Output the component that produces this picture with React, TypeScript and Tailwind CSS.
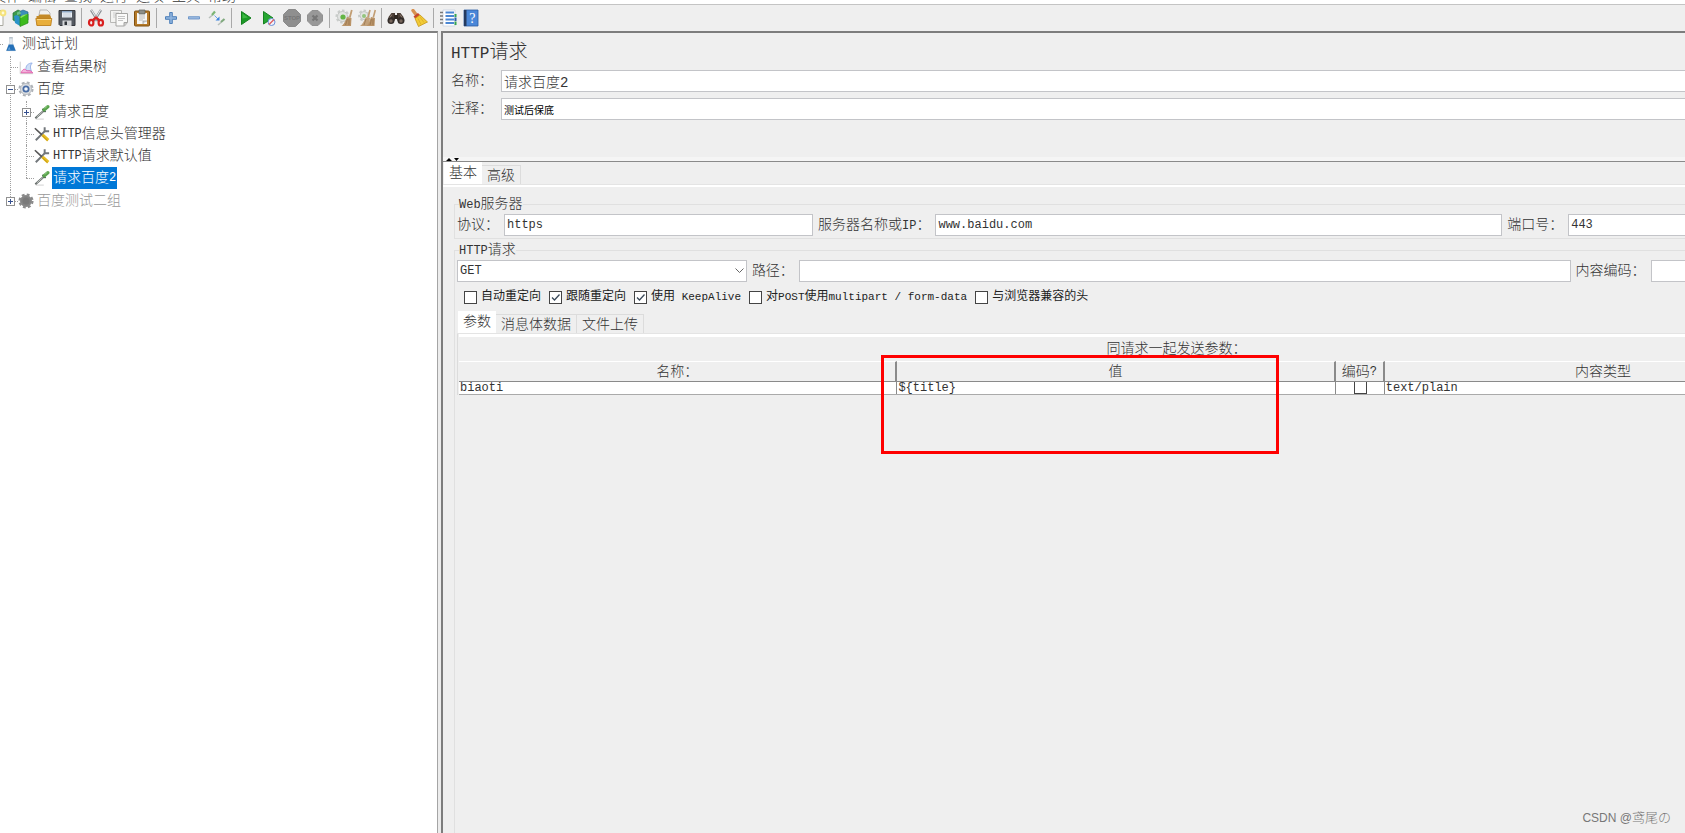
import { ReactNode, useId, useState } from "react";
import clsx from "clsx";

const MENUS = ["文件", "编辑", "查找", "运行", "选项", "工具", "帮助"];

const FIELD =
  "h-[22px] min-w-0 border border-[#c3c4c8] bg-white px-[2px] outline-none focus:border-[#0078d7]";

// Half-width runs are set a little smaller so two of them fill one CJK cell
const MixedText = ({ text, latin = "text-[12px]" }: { text: string; latin?: string }) => (
  <>
    {text.split(/([\x20-\x7e]+)/).map((part, i) =>
      i % 2 ? (
        <span key={i} className={clsx("whitespace-pre", latin)}>
          {part}
        </span>
      ) : (
        part
      )
    )}
  </>
);

const Icon = ({ children, size = 18 }: { children: ReactNode; size?: number }) => (
  <svg width={size} height={size} viewBox="0 0 18 18" fill="none" className="shrink-0" aria-hidden="true">
    {children}
  </svg>
);

const NewIcon = () => (
  <Icon>
    <path d="M3 1.500h11v15H3z" fill="#fdfdfd" stroke="#a9a9a0" />
    <circle cx="14" cy="4" r="3.400" fill="#f5e27a" />
    <circle cx="14" cy="4" r="1.400" fill="#fffbd8" />
  </Icon>
);

const TemplatesIcon = () => (
  <Icon>
    <path d="M1 4l5-3 4 2v8l-5 2-4-2z" fill="#3d9a4a" stroke="#247339" strokeWidth=".7" />
    <path d="M7 3l4-2 5 2v8l-5 1z" fill="#3c8fb8" stroke="#27668c" strokeWidth=".7" />
    <path d="M2 7l3-1 3 2v9l-5-3z" fill="#2a93c8" />
    <path d="M5 3.500l3-1.500 1 3-4 1z" fill="#6cc287" />
    <path d="M8 8l8-3v9l-8 3.500z" fill="#3dbb1c" stroke="#258d17" strokeWidth=".7" />
    <path d="M8 8l3-2 5-1-7 4z" fill="#8be35f" />
  </Icon>
);

const OpenIcon = () => (
  <Icon>
    <path d="M4 6l1-5h7l3 3v5H4z" fill="#f1f1ee" stroke="#aaa" strokeWidth=".8" />
    <path d="M1.500 7h2l1-1.500h10L16 8v8.500H1.500z" fill="#c48a26" />
    <path d="M.8 9.500h16l-1 7H2z" fill="#e8ae3b" stroke="#ba7c1b" strokeWidth=".8" />
    <path d="M2 10.500h14" stroke="#f9d583" />
  </Icon>
);

const SaveIcon = () => (
  <Icon>
    <path d="M1 1.500h16v15H2l-1-1z" fill="#555a62" stroke="#36393f" />
    <path d="M4 2h10v6.500H4z" fill="#e9eef4" />
    <path d="M4 2h10v1.500H4z" fill="#8ba5c2" />
    <path d="M5 5h8M5 7h8" stroke="#b6c2d0" strokeWidth=".8" />
    <path d="M4.500 11.500h9V17h-9z" fill="#d5d7da" />
    <path d="M6.500 12.500H9V16H6.500z" fill="#30343a" />
  </Icon>
);

const CutIcon = () => (
  <Icon>
    <path d="M4 1l7 11M14 1L7 12" stroke="#8c9196" strokeWidth="2.400" />
    <path d="M4.500 1l6 10M13.500 1l-6 10" stroke="#eceeef" strokeWidth="1" />
    <ellipse cx="4.200" cy="13.700" rx="2.200" ry="2.800" stroke="#d92020" strokeWidth="2.200" />
    <ellipse cx="13.800" cy="13.700" rx="2.200" ry="2.800" stroke="#d92020" strokeWidth="2.200" />
    <path d="M5.500 11.500L9 8.500l3.500 3" stroke="#d92020" strokeWidth="2.400" />
  </Icon>
);

const CopyIcon = () => (
  <Icon>
    <path d="M.5 1.500h11v12H.5z" fill="#f3f3f1" stroke="#b8b8b6" />
    <path d="M3 4h6M3 6h3M3 8h2" stroke="#ccc" />
    <path d="M6 4.500h11.500v9l-3 3.500H6z" fill="#fafaf9" stroke="#a5a5a3" />
    <path d="M8 7.500h7M8 9.500h7M8 11.500h5" stroke="#c4c4c4" />
    <path d="M14 17v-3.500h3.500" fill="#ccc" stroke="#a5a5a3" />
  </Icon>
);

const PasteIcon = () => (
  <Icon>
    <rect x="1.500" y="2" width="15" height="15" rx="1" fill="#b57a29" stroke="#80500f" />
    <path d="M4 4h10v11H4z" fill="#f7f7f5" />
    <path d="M6 1h6v4H6z" fill="#8c8e88" stroke="#5c5e59" strokeWidth=".7" />
    <path d="M6 7h6M6 9h6M6 11h4" stroke="#b9b9b9" />
    <path d="M10 15v-3h4" fill="#d8d8d5" stroke="#999" strokeWidth=".7" />
  </Icon>
);

const PlusIcon = () => (
  <Icon>
    <path d="M7.700 3.500h2.600v4.200h4.200v2.600h-4.200v4.200H7.700v-4.200H3.500V7.700h4.200z" fill="#8db3de" stroke="#4f80ba" />
  </Icon>
);

const MinusIcon = () => (
  <Icon>
    <path d="M3.500 7.700h11v2.300h-11z" fill="#9dbce2" stroke="#5f8cc4" strokeWidth=".8" />
  </Icon>
);

const ToggleIcon = () => (
  <Icon>
    <path d="M1 9l3.500-3" stroke="#b9c0bc" strokeWidth="1.600" />
    <path d="M4 6l3-3.500" stroke="#7bb574" strokeWidth="2.200" />
    <path d="M10 16l3.500-3" stroke="#b9c0bc" strokeWidth="1.600" />
    <path d="M13 13l3.500-3" stroke="#7fa97d" strokeWidth="2.200" />
    <path d="M6.500 6.500L10 10" stroke="#6ba5ec" />
    <path d="M11.500 7.500v4h-4z" fill="#3d84e0" />
  </Icon>
);

const PlayIcon = () => (
  <Icon>
    <path d="M4.500 2.500L14 9l-9.500 6.500z" fill="#1b9a26" stroke="#14801e" />
    <path d="M5.500 4.500l5.500 4-5.500 1z" fill="#3eb944" />
  </Icon>
);

const PlayNoTimersIcon = () => (
  <Icon>
    <path d="M3.500 2.500L13 9l-9.500 6z" fill="#27a632" stroke="#178322" />
    <circle cx="11.500" cy="13" r="3.500" fill="#eef2fb" stroke="#6c8fd8" />
    <path d="M9 15.500l5-5" stroke="#e05b5b" strokeWidth="1.200" />
  </Icon>
);

const StopIcon = () => (
  <Icon>
    <path d="M5.500.5h7l5 5v7l-5 5h-7l-5-5v-7z" fill="#8f8f8f" stroke="#8a8a8a" />
    <text x="9" y="11.300" textAnchor="middle" fontSize="6" fontWeight="bold" fontFamily="Liberation Sans, sans-serif" fill="#777">
      STOP
    </text>
  </Icon>
);

const ShutdownIcon = () => (
  <Icon>
    <path d="M6 1.500h6l4.500 4.500v6L12 16.500H6L1.500 12V6z" fill="#989898" stroke="#919191" />
    <path d="M6.500 6.500l5 5m0-5l-5 5" stroke="#767676" strokeWidth="2.200" />
  </Icon>
);

const ClearIcon = () => (
  <Icon>
    <circle cx="7.500" cy="7.500" r="6" stroke="#c9ccca" strokeWidth="2" strokeDasharray="2.500 2" />
    <circle cx="7.500" cy="7.500" r="5" fill="#e2e4e2" stroke="#c3c6c4" />
    <circle cx="8" cy="8" r="2.600" fill="#63b545" />
    <path d="M16.800 1l-2 7.500" stroke="#c29d73" strokeWidth="1.800" />
    <path d="M12 8l4.500 1-.5 8H6.500c2-1 4-5 5.500-9z" fill="#ba9468" />
    <path d="M12.500 10l-2 6m3.500-6v6" stroke="#94714a" strokeWidth=".7" />
  </Icon>
);

const ClearAllIcon = () => (
  <Icon>
    <circle cx="6" cy="6.500" r="5" stroke="#c9ccca" strokeWidth="2" strokeDasharray="2.500 2" />
    <circle cx="6" cy="6.500" r="4" fill="#e2e4e2" stroke="#c3c6c4" />
    <circle cx="6" cy="7" r="2" fill="#93c57e" />
    <path d="M12 1l-2 7.500M17.300 1l-2 7.500" stroke="#c29d73" strokeWidth="1.600" />
    <path d="M8 8l4 1-1 8H2c2-1 4-5 6-9z" fill="#c2a17a" />
    <path d="M13 8l4 1-.5 8H8.500c2-1 3-5 4.500-9z" fill="#ba9468" />
    <path d="M8 10l-2 6m7.500-6l-1.500 6m3-6v6" stroke="#94714a" strokeWidth=".7" />
  </Icon>
);

const SearchIcon = () => (
  <Icon>
    <path d="M4.500 4H8v7.500H1.500V8zM13.500 4H10v7.500h6.500V8z" fill="#4a3d35" />
    <path d="M7 6h4v4H7z" fill="#302822" />
    <circle cx="4" cy="11.500" r="3.500" fill="#332d2a" />
    <circle cx="14" cy="11.500" r="3.500" fill="#332d2a" />
    <circle cx="4" cy="12" r="1.700" fill="#77665c" />
    <circle cx="14" cy="12" r="1.700" fill="#77665c" />
    <path d="M5 5.500L3 8.500m10-3l2 3" stroke="#8d7b70" />
  </Icon>
);

const ResetSearchIcon = () => (
  <Icon>
    <path d="M3 1.500l3 4" stroke="#d79150" strokeWidth="3.400" strokeLinecap="round" />
    <path d="M3.500 7.500L8 4l2 2-4.500 4z" fill="#c9472c" />
    <path d="M5 9.500L10 6l7.500 7-9 4.500z" fill="#f2cb35" stroke="#c59618" strokeWidth=".8" />
    <path d="M8 9.500l3 6m-1-7.500l4 5.500" stroke="#d9ac2a" strokeWidth=".8" />
  </Icon>
);

const FunctionIcon = () => (
  <Icon>
    <path d="M4 1h12v16H4z" fill="#fff" stroke="#c9d2df" strokeWidth=".8" />
    <path d="M6.500 3.500H15M6.500 7H15M6.500 10.500H15M6.500 14H15" stroke="#4a86d3" strokeWidth="1.800" />
    <path d="M1 3.500h3M1 7h3M1 10.500h3M1 14h3" stroke="#777" strokeWidth="1.500" />
    <path d="M16.500 5v3M16.500 12.500v3.500" stroke="#35a353" strokeWidth="2" />
    <path d="M16.500 8.500v3.500" stroke="#2b5fa8" strokeWidth="2" />
  </Icon>
);

const HelpIcon = () => (
  <Icon>
    <path d="M2 1h14v16H2z" fill="#4a87d8" stroke="#2b5da5" strokeWidth=".8" />
    <path d="M2 1h2.500v16H2z" fill="#253a5e" />
    <text x="10.300" y="14" textAnchor="middle" fontSize="14" fontFamily="Liberation Serif, serif" fill="#fff">
      ?
    </text>
  </Icon>
);

const FlaskIcon = () => (
  <Icon size={16}>
    <path d="M7.500 2h3v5.500l3.500 9H4l3.500-9z" fill="#e3ebf2" stroke="#c3ccd4" strokeWidth=".8" />
    <path d="M6.500 9.500h5l2.800 7H3.700z" fill="#2470b8" />
    <path d="M7 12l-1.500 3.500h3z" fill="#63a3da" />
    <path d="M7 2h4" stroke="#a4b0ba" />
  </Icon>
);

const GraphIcon = () => (
  <Icon size={16}>
    <path d="M2.500 3v13.500H17" stroke="#c8c8c8" />
    <path d="M9 13c-1-6 3-8.500 7-8.500-3 3-2 6-1 9z" fill="#cfdff7" stroke="#94afe6" />
    <path d="M3.500 15.500c1.500-4 4-5 5.500-3s5-1 7.500 3z" fill="#f3b3dc" stroke="#e052a5" />
  </Icon>
);

const GearIcon = ({ muted = false }: { muted?: boolean }) => (
  <Icon size={16}>
    <circle cx="9" cy="9" r="7.300" stroke={muted ? "#8c8c8c" : "#adb1b6"} strokeWidth="2.400" strokeDasharray="3.200 2.530" />
    <circle cx="9" cy="9" r="6.200" fill={muted ? "#858585" : "#dcdfe2"} stroke={muted ? "#858585" : "#b3b7bc"} />
    <circle cx="9" cy="9" r="3" fill={muted ? "#7a7a7a" : "#f4f7fb"} stroke={muted ? "#7a7a7a" : "#4a6ea6"} strokeWidth="2" />
  </Icon>
);

const DropperIcon = () => (
  <Icon size={16}>
    <path d="M2 17h9" stroke="#ddd" strokeWidth="1.500" />
    <path d="M1.500 16L11 7.500" stroke="#626866" strokeWidth="2.200" />
    <path d="M3 14.700l7-6.200" stroke="#e6ebe8" strokeWidth=".8" />
    <path d="M9.500 5.500L13 9" stroke="#41544a" strokeWidth="1.800" />
    <path d="M11.500 6.500L15.500 3" stroke="#5aa34d" strokeWidth="3.800" strokeLinecap="round" />
    <path d="M12 5l3-2.500" stroke="#9bd58c" />
  </Icon>
);

const ToolsIcon = () => (
  <Icon size={16}>
    <path d="M2 16L12.500 5.500" stroke="#72777b" strokeWidth="2.200" />
    <path d="M12 1.500v4.500h5" stroke="#72777b" strokeWidth="2.200" />
    <path d="M1 2.500L9 10" stroke="#555" strokeWidth="1.800" />
    <path d="M9.500 10l6.500 6" stroke="#e8bd20" strokeWidth="3.600" />
    <path d="M9 10.500l6 6" stroke="#a77e10" strokeWidth=".7" />
  </Icon>
);

const TOOLBAR = [
  [
    { label: "新建", Glyph: NewIcon },
    { label: "模板", Glyph: TemplatesIcon },
    { label: "打开", Glyph: OpenIcon },
    { label: "保存", Glyph: SaveIcon },
  ],
  [
    { label: "剪切", Glyph: CutIcon },
    { label: "复制", Glyph: CopyIcon },
    { label: "粘贴", Glyph: PasteIcon },
  ],
  [
    { label: "展开", Glyph: PlusIcon },
    { label: "折叠", Glyph: MinusIcon },
    { label: "切换", Glyph: ToggleIcon },
  ],
  [
    { label: "启动", Glyph: PlayIcon },
    { label: "不停顿启动", Glyph: PlayNoTimersIcon },
    { label: "停止", Glyph: StopIcon },
    { label: "关闭", Glyph: ShutdownIcon },
  ],
  [
    { label: "清除", Glyph: ClearIcon },
    { label: "清除全部", Glyph: ClearAllIcon },
  ],
  [
    { label: "搜索", Glyph: SearchIcon },
    { label: "重置搜索", Glyph: ResetSearchIcon },
  ],
  [
    { label: "函数助手", Glyph: FunctionIcon },
    { label: "帮助文档", Glyph: HelpIcon },
  ],
];

const Toolbar = () => (
  <div className="-ml-[14px] flex h-[26px] items-center">
    {TOOLBAR.map((group, i) => (
      <div key={i} className="flex items-center">
        {i > 0 && <span className="mr-[2px] ml-[3px] h-5 w-px bg-[#a9a9a9]" />}
        {group.map(({ label, Glyph }) => (
          <button key={label} type="button" aria-label={label} className="flex w-[23px] justify-center">
            <Glyph />
          </button>
        ))}
      </div>
    ))}
  </div>
);

interface TreeNodeProps {
  icon: ReactNode;
  label: string;
  expanded?: boolean;
  selected?: boolean;
  muted?: boolean;
  children?: ReactNode;
}

const TreeNode = ({ icon, label, expanded, selected, muted, children }: TreeNodeProps) => (
  <li className="relative before:absolute before:inset-y-0 before:left-0 before:border-l before:border-dotted before:border-[#a0a0a0] last:before:bottom-auto last:before:h-[11px]">
    <div className="flex h-[22px] items-center">
      <span className="w-2 border-t border-dotted border-[#a0a0a0]" />
      {expanded !== undefined && (
        <button
          type="button"
          aria-label={expanded ? "折叠" : "展开"}
          className="absolute top-[7px] -left-1 flex size-[9px] items-center justify-center border border-[#919191] bg-white"
        >
          <span className="absolute h-px w-[5px] bg-[#35508f]" />
          {!expanded && <span className="absolute h-[5px] w-px bg-[#35508f]" />}
        </button>
      )}
      {icon}
      <span
        className={clsx(
          "ml-[2px] flex h-[22px] items-center px-px",
          selected && "bg-[#0078d7] text-white",
          muted && "text-[#999]"
        )}
      >
        <MixedText text={label} />
      </span>
    </div>
    {children && <ul className="ml-4 py-px">{children}</ul>}
  </li>
);

const TestTree = () => (
  <aside className="w-[438px] shrink-0 border-t-2 border-r border-t-[#808080] border-r-[#a5a5a5] bg-white">
    <div className="flex h-[22px] items-center">
      <span className="w-[3px] border-t border-dotted border-[#a0a0a0]" />
      <FlaskIcon />
      <span className="ml-[3px]">测试计划</span>
    </div>
    <ul className="ml-[10px] pt-px">
      <TreeNode icon={<GraphIcon />} label="查看结果树" />
      <TreeNode icon={<GearIcon />} label="百度" expanded>
        <TreeNode icon={<DropperIcon />} label="请求百度" expanded={false} />
        <TreeNode icon={<ToolsIcon />} label="HTTP信息头管理器" />
        <TreeNode icon={<ToolsIcon />} label="HTTP请求默认值" />
        <TreeNode icon={<DropperIcon />} label="请求百度2" selected />
      </TreeNode>
      <TreeNode icon={<GearIcon muted />} label="百度测试二组" expanded={false} muted />
    </ul>
  </aside>
);

const Tabs = ({ items }: { items: string[] }) => {
  const [active, setActive] = useState(items[0]);

  return (
    <div role="tablist" className="flex h-[22px] items-end border-b border-[#e4e4e4] pl-px">
      {items.map((item) => (
        <button
          key={item}
          type="button"
          role="tab"
          aria-selected={item === active}
          onClick={() => setActive(item)}
          className={clsx(
            "px-[5px]",
            item === active ? "h-[22px] bg-white" : "h-[19px] border-t border-r border-[#dcdcdc]"
          )}
        >
          {item}
        </button>
      ))}
    </div>
  );
};

const Checkbox = ({ label, checked = false }: { label: string; checked?: boolean }) => (
  <label className="flex items-center gap-1 text-[12px] font-normal whitespace-nowrap text-[#222]">
    <span className="relative size-[13px]">
      <input
        type="checkbox"
        defaultChecked={checked}
        className="peer block size-[13px] appearance-none border border-[#444] bg-white"
      />
      <svg
        viewBox="0 0 13 13"
        className="pointer-events-none absolute inset-0 hidden peer-checked:block"
        fill="none"
        stroke="#3b4a5a"
        strokeWidth="1.300"
      >
        <path d="M3 6.500l2.500 2.500L10.500 3.500" />
      </svg>
    </span>
    <span>
      <MixedText text={label} latin="text-[11px]" />
    </span>
  </label>
);

interface LabeledInputProps {
  label: string;
  value?: string;
  className: string;
}

const LabeledInput = ({ label, value, className }: LabeledInputProps) => {
  const id = useId();

  return (
    <>
      <label htmlFor={id} className="shrink-0">
        <MixedText text={label} />
      </label>
      <input id={id} defaultValue={value} className={clsx(FIELD, "text-[12px]", className)} />
    </>
  );
};

const TH = "h-5 border-t border-r-2 border-b border-t-white border-r-[#8a8a8a] border-b-[#8a8a8a] p-0 font-light";
const TD = "h-3 border-r border-[#8a8a8a] p-0 pl-px align-top";

const ParamsTable = () => (
  <table className="w-full table-fixed border-separate border-spacing-0 border-b border-[#aaa]">
    <colgroup>
      <col />
      <col />
      <col className="w-[49px]" />
      <col />
      <col className="w-[63px]" />
    </colgroup>
    <thead>
      <tr>
        {["名称：", "值", "编码?", "内容类型", "包含等于?"].map((title) => (
          <th key={title} scope="col" className={TH}>
            <span className="flex h-[19px] items-center justify-center overflow-hidden whitespace-nowrap">
              <MixedText text={title} />
            </span>
          </th>
        ))}
      </tr>
    </thead>
    <tbody className="bg-white text-[12px] leading-[12px]">
      <tr>
        <td className={TD}>biaoti</td>
        <td className={TD}>{"${title}"}</td>
        <td className={TD}>
          <div className="flex h-3 items-end justify-center overflow-hidden">
            <input
              type="checkbox"
              aria-label="编码"
              className="size-[13px] shrink-0 appearance-none border border-[#444] bg-white checked:bg-[#3b4a5a]"
            />
          </div>
        </td>
        <td className={TD}>text/plain</td>
        <td className={TD} />
      </tr>
    </tbody>
  </table>
);

const RequestPanel = () => (
  <main className="relative min-w-0 flex-1 overflow-hidden border-t-2 border-l-2 border-[#7d7d7d]">
    {/* The form is wider than the visible pane and runs off its right edge */}
    <div className="flex min-h-full w-[117%] flex-col">
      <section className="px-2 pt-2 pb-[37px]">
        <h1 className="text-[19px] leading-6">
          <MixedText text="HTTP请求" latin="text-[16px]" />
        </h1>
        <div className="mt-1 flex flex-col gap-1.5">
          <div className="flex items-center gap-2">
            <label htmlFor="name" className="shrink-0">
              名称：
            </label>
            <input id="name" defaultValue="请求百度2" className={clsx(FIELD, "flex-1 text-[14px]")} />
          </div>
          <div className="flex items-center gap-2">
            <label htmlFor="comment" className="shrink-0">
              注释：
            </label>
            <input
              id="comment"
              defaultValue="测试后保底"
              className={clsx(FIELD, "flex-1 text-[10px] font-normal text-black")}
            />
          </div>
        </div>
      </section>

      <div className="mb-px flex h-[5px] items-end border-b border-[#8a8a8a] bg-[#f5f5f5] pl-[2px]">
        <svg width="16" height="4" viewBox="0 0 16 4" aria-hidden="true">
          <path d="M1 4l3-3 3 3zM9 1h5l-2.500 3z" fill="#000" />
        </svg>
      </div>

      <Tabs items={["基本", "高级"]} />
      <div className="h-[2px] bg-white" />

      <div className="flex flex-1 flex-col pt-[9px] pr-2 pl-[11px]">
        <fieldset className="min-w-0 border border-[#e0e0e0] pt-px pr-px pb-[2px] pl-[2px]">
          <legend className="ml-[2px] leading-4">
            <MixedText text="Web服务器" />
          </legend>
          <div className="flex items-center gap-[5px]">
            <LabeledInput label="协议：" value="https" className="flex-[307]" />
            <LabeledInput label="服务器名称或IP：" value="www.baidu.com" className="flex-[568]" />
            <LabeledInput label="端口号：" value="443" className="flex-[316]" />
          </div>
        </fieldset>

        <fieldset className="mt-[3px] flex min-w-0 flex-1 flex-col border border-b-0 border-[#e0e0e0] pt-px pr-px pl-[2px]">
          <legend className="ml-[2px] leading-4">
            <MixedText text="HTTP请求" />
          </legend>
          <div className="flex items-center gap-[5px]">
            <div className="relative flex min-w-0 flex-[293]">
              <select
                aria-label="方法"
                defaultValue="GET"
                className={clsx(FIELD, "w-full appearance-none text-[12px]")}
              >
                <option>GET</option>
                <option>POST</option>
                <option>PUT</option>
                <option>DELETE</option>
              </select>
              <svg
                width="9"
                height="6"
                viewBox="0 0 9 6"
                fill="none"
                stroke="#666"
                className="pointer-events-none absolute top-2 right-[3px]"
              >
                <path d="M.5 .5l4 4 4-4" />
              </svg>
            </div>
            <LabeledInput label="路径：" className="flex-[774]" />
            <LabeledInput label="内容编码：" className="flex-[232]" />
          </div>

          <div className="flex h-[30px] items-center gap-2 pl-[7px]">
            <Checkbox label="自动重定向" />
            <Checkbox label="跟随重定向" checked />
            <Checkbox label="使用 KeepAlive" checked />
            <Checkbox label="对POST使用multipart / form-data" />
            <Checkbox label="与浏览器兼容的头" />
          </div>

          <Tabs items={["参数", "消息体数据", "文件上传"]} />
          <div className="flex-1 border-l border-[#dcdcdc] pl-px">
            <div className="h-[3px] bg-white" />
            <p className="h-6 pl-2 text-center leading-6">同请求一起发送参数：</p>
            <div className="relative">
              <ParamsTable />
              <div className="pointer-events-none absolute -top-[6px] left-[422px] h-[99px] w-[398px] border-[3px] border-[#fe0000]" />
            </div>
          </div>
        </fieldset>
      </div>
    </div>

    <span className="absolute right-[14px] bottom-[5px] font-['Liberation_Sans','Noto_Sans_CJK_SC',sans-serif] text-[13px] text-[#777]">
      <MixedText text="CSDN @鸢尾の" />
    </span>
  </main>
);

export default function App() {
  return (
    <div className="flex min-h-screen flex-col overflow-hidden bg-[#efefef] font-['Liberation_Mono','Noto_Sans_CJK_SC',monospace] text-[14px] leading-5 font-light text-[#333]">
      <nav className="-ml-2 flex h-1 items-end gap-2 overflow-hidden bg-white">
        {MENUS.map((menu) => (
          <button key={menu} type="button" className="shrink-0 leading-[14px]">
            {menu}
          </button>
        ))}
      </nav>
      <header className="border-t border-[#c4c4c4]">
        <Toolbar />
      </header>
      <div className="flex flex-1">
        <TestTree />
        <div className="w-[3px] shrink-0 bg-[#ececec]" />
        <RequestPanel />
      </div>
    </div>
  );
}
